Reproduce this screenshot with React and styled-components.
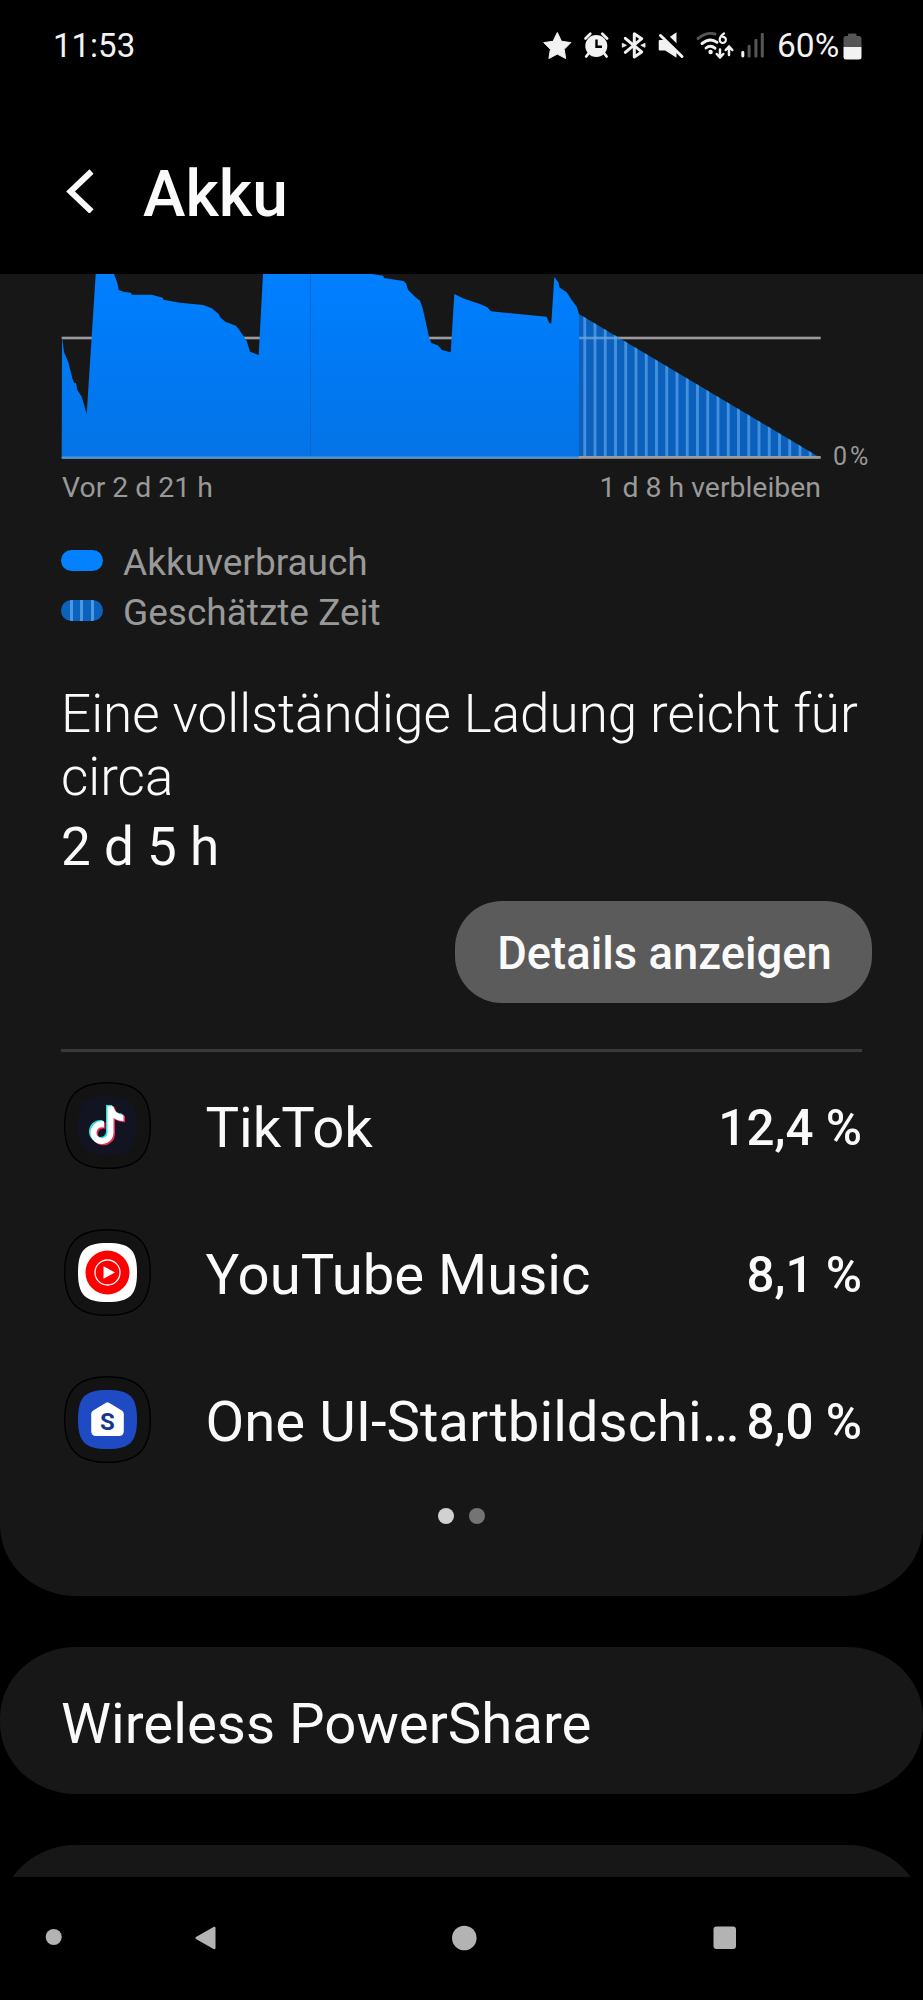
import React from 'react'
import styled, { createGlobalStyle } from 'styled-components'

const GlobalStyle = createGlobalStyle`
*{
    box-sizing:border-box;
}
body{
    margin:0;
    background-color:#000;
    color:#fafafa;
    font-family:Roboto, 'Liberation Sans', sans-serif;
}
`

const Phone = styled.div`
display:grid;
grid-template-rows:92px 182px 1603px 123px;
width:923px;
height:2000px;
overflow:hidden;
background-color:#000;
`

const StatusBar = styled.div`
display:flex;
align-items:flex-start;
justify-content:space-between;
padding:26px 61px 0 53px;
color:#f2f2f2;
font-size:33px;
line-height:40px;

.icons{
    display:flex;
    align-items:center;
}
svg{
    display:block;
}
`

const Percent = styled.span`
width:62px;
margin:0 4px 0 5px;
font-size:33.5px;
`

const Header = styled.header`
display:flex;
align-items:flex-start;
padding:60px 0 0 65px;

h1{
    margin:5px 0 0 48px;
    font-size:64px;
    font-weight:500;
    line-height:76px;
}
.back{
    display:block;
    margin-top:15px;
}
`

const Content = styled.main`
overflow:hidden;
`

const Card = styled.section`
height:${({ $height }) => $height}px;
margin-bottom:51px;
background-color:#171717;
border-radius:${({ $radius }) => $radius};
`

const ChartRow = styled.div`
display:flex;
align-items:flex-end;
padding-left:61px;
height:186px;
gap:12px;
color:#999;

svg{
    display:block;
    flex:none;
}
span{
    font-size:25px;
    line-height:30px;
    letter-spacing:3px;
    margin-bottom:-12px;
}
`

const ChartLabels = styled.div`
display:flex;
justify-content:space-between;
padding:11px 102px 0 62px;
font-size:28.4px;
line-height:34px;
color:#999;
`

const Legend = styled.ul`
list-style:none;
margin:30px 0 0;
padding:0 0 0 61px;
`

const LegendItem = styled.li`
display:flex;
align-items:center;
gap:20px;
height:50px;
font-size:37px;
color:#999;

span{
    margin-top:4px;
}
`

const Swatch = styled.i`
width:42px;
height:21px;
border-radius:11px;
background:${({ $striped }) => $striped
    ? 'linear-gradient(90deg,#0b62bd 9px,#4b97e2 9px,#4b97e2 12px,#0b62bd 12px,#0b62bd 19.5px,#4b97e2 19.5px,#4b97e2 22.5px,#0b62bd 22.5px,#0b62bd 30px,#4b97e2 30px,#4b97e2 33px,#0b62bd 33px)'
    : '#0381fe'};
`

const Estimate = styled.div`
padding:48px 40px 0 61px;
font-size:53px;
line-height:62.5px;

p{
    margin:0;
    font-weight:300;
}
strong{
    display:block;
    margin-top:8px;
    font-weight:400;
}
`

const DetailsButton = styled.button`
display:block;
width:417px;
height:102px;
margin:22px 51px 0 auto;
padding:4px 0 0 2px;
border:0;
border-radius:47px;
background-color:#5b5b5b;
color:#fafafa;
font-family:inherit;
font-size:45.4px;
font-weight:500;
`

const Divider = styled.hr`
height:3px;
margin:46px 61px 0;
border:0;
background-color:#3a3a3a;
`

const AppRow = styled.div`
display:flex;
align-items:center;
height:147px;
padding:0 61px 0 64px;

svg{
    display:block;
    flex:none;
}
.name{
    flex:none;
    margin:6px 0 0 54.5px;
    font-size:56.3px;
    line-height:70px;
    white-space:nowrap;
}
.usage{
    margin:6px 0 0 auto;
    font-size:49.3px;
    font-weight:500;
    line-height:60px;
    white-space:nowrap;
}
`

const Dots = styled.div`
display:flex;
justify-content:center;
gap:15px;
margin-top:15px;
`

const Dot = styled.span`
width:16px;
height:16px;
border-radius:50%;
background-color:${({ $active }) => $active ? '#d1d1d1' : '#747474'};
`

const MenuTitle = styled.h2`
margin:0;
padding:42px 0 0 61px;
font-size:56.4px;
font-weight:400;
line-height:70px;
`

const NavBar = styled.nav`
display:flex;
align-items:center;

svg{
    display:block;
}
`

// battery level over time, in chart coordinates
const history = [
    [62, 337], [64, 352], [68.3, 362.3], [72.3, 378.3], [74.3, 383.3], [76, 382.7], [77.3, 390], [81.7, 396.7], [86.7, 414],
    [95.7, 274], [114, 274], [117.3, 282.7], [118.7, 290], [124, 292], [131, 292.7], [131.7, 294.7], [151.7, 294.7],
    [162.7, 297.7], [163.3, 299.7], [180, 302.7], [203.3, 305], [211.7, 308.3], [219, 314.3], [220, 317.3],
    [225.3, 321.7], [236, 325.7], [240, 331], [246.7, 341], [250, 351.7], [258.7, 355], [263, 274], [371.7, 274],
    [383.3, 275.7], [384, 278], [403.3, 281], [406, 283.3], [408, 289.7], [416, 297.7], [420, 300.7], [422.7, 308.3],
    [426, 323.3], [429.3, 338.3], [431.3, 343], [437.7, 345.3], [442, 350], [450.7, 352.3], [454.3, 294],
    [464, 298.7], [480, 304], [487.3, 307.3], [490.7, 311.3], [546.7, 316.7], [549.3, 323.3], [551.3, 323.3],
    [554.3, 277], [558.3, 282.3], [559.7, 287.7], [566.7, 292.3], [571.7, 300], [576.7, 306.7], [579, 314],
]

const stripes = Array.from({ length: 23 }, (_, i) => 583.3 + i * 10.25)

const BatteryChart = () => (
    <svg width="760" height="186" viewBox="61 274 760 186">
        <defs>
            <linearGradient id="usage" x1="0" y1="274" x2="0" y2="458" gradientUnits="userSpaceOnUse">
                <stop offset="0" stopColor="#007fff" />
                <stop offset="0.35" stopColor="#007bf7" />
                <stop offset="1" stopColor="#0473e6" />
            </linearGradient>
            <clipPath id="remaining">
                <path d="M579 314L819 457H579z" />
            </clipPath>
        </defs>
        <rect x="61.7" y="336.7" width="759" height="2.6" fill="#9c9c9c" />
        <path d={`M61.7 458L${history.map((p) => p.join(' ')).join('L')}V458z`} fill="url(#usage)" />
        <path d="M310.5 274V457" stroke="#0a66d0" strokeWidth="1" />
        <g clipPath="url(#remaining)">
            <rect x="579" y="300" width="242" height="160" fill="#0a60bb" />
            {stripes.map((x) => <rect key={x} x={x} y="300" width="2.9" height="160" fill="#4390df" />)}
            <rect x="579" y="336.7" width="60" height="2.6" fill="#6ca5dc" opacity="0.8" />
        </g>
        <rect x="61.7" y="456.5" width="518" height="2.4" fill="#5b93cf" />
        <rect x="579" y="456" width="241.7" height="2.8" fill="#9c9c9c" />
    </svg>
)

const StatusIcons = () => (
    <svg width="232" height="40" viewBox="540 26 232 40" fill="#f2f2f2">
        <path d="M557.3 32.5l4.2 8.8 9.4 1.3-6.7 6.7 1.5 9.2-8.4-4.4-8.4 4.4 1.5-9.2-6.7-6.7 9.4-1.3z" stroke="#f2f2f2" strokeLinejoin="round" />
        {/* alarm */}
        <circle cx="596.3" cy="46" r="11" />
        <path d="M585.5 38.5l4.8-4.7M607.1 38.5l-4.8-4.7M588.5 53.5l-2.3 3M604.3 53.5l2.3 3" stroke="#f2f2f2" strokeWidth="2.7" strokeLinecap="round" />
        <path d="M596.5 39.5v7.3h5.5" fill="none" stroke="#000" strokeWidth="2.4" />
        {/* bluetooth */}
        <path d="M625.3 38.3l16.4 13.6-7.4 5V33.7l7.4 5-16.4 13.6" fill="none" stroke="#f2f2f2" strokeWidth="3" strokeLinejoin="round" strokeLinecap="round" />
        <path d="M622.3 43.3l4.2 2-4.2 2zM645 43.3l-4.2 2 4.2 2z" stroke="#f2f2f2" strokeWidth="0.8" />
        {/* muted speaker */}
        <path d="M658.7 41q0-1 1-1h5.5l11.3-7.7v25.4L665.200 50.500h-5.500q-1 0-1-1z" />
        <path d="M662 32.500l23 22.500" stroke="#000" strokeWidth="5" />
        <path d="M660.500 35.500l21.500 21" stroke="#f2f2f2" strokeWidth="3" strokeLinecap="round" />
        {/* wifi 6 */}
        <g fill="none" strokeWidth="2.9" strokeLinecap="round">
            <path d="M698 38.5q9-7 17-4.500" stroke="#555" />
            <path d="M702 43.500q8-6.500 15-1.200M706 48q4.500-3.800 9 .2" stroke="#f2f2f2" />
            <path d="M724 33.500q-4.300 3-4.300 6.300a3.100 3.100 0 1 0 3-3" stroke="#f2f2f2" strokeWidth="2.200" />
            <path d="M720 49.500v7.500M716.700 54l3.300 3.500 3.300-3.500M729 55v-8M725.700 50l3.300-3.500 3.300 3.500" stroke="#f2f2f2" strokeWidth="2.500" />
        </g>
        <circle cx="710.6" cy="52" r="2.2" />
        {/* mobile signal */}
        <rect x="741.3" y="51" width="3" height="6.5" rx="1.4" />
        <g fill="#555">
            <rect x="747.6" y="45" width="3" height="12.5" rx="1" />
            <rect x="754.4" y="39" width="3" height="18.5" rx="1" />
            <rect x="760.8" y="33" width="3" height="24.5" rx="1" />
        </g>
    </svg>
)

const BatteryIcon = () => (
    <svg width="19" height="27" viewBox="0 0 19 27">
        <path d="M5 1.5q0-1 1-1h6.5q1 0 1 1V3H16q2.5 0 2.5 2.5V14H.5V5.5Q.5 3 3 3h2z" fill="#555" />
        <path d="M.5 14h18v10q0 2.5-2.5 2.5H3Q.5 26.5.5 24z" fill="#f2f2f2" />
    </svg>
)

const squircle = 'M43.5.7C74 .7 86.3 14 86.3 43.5S74 86.3 43.5 86.3.7 73 .7 43.5 14 .7 43.5.7z'
const tile = 'M43.5 14C66 14 73 21 73 43.5S66 73 43.5 73 14 66 14 43.5 21 14 43.5 14z'
const note = 'M42 23h6c.6 4.8 4.2 8.2 10 8.6v6.2c-3.8 0-7.2-1.2-10-3v14.700a11.500 11.500 0 1 1-9.500-11.400v6.300a5.500 5.500 0 1 0 3.500 5.100z'

const AppIcon = ({ app }) => (
    <svg width="87" height="87" viewBox="0 0 87 87">
        <path d={squircle} fill="#131313" stroke="#000" strokeWidth="1.4" />
        {app === 'tiktok' && <>
            <path d={tile} fill="#131421" />
            <path d={note} fill="#25e4dc" />
            <path d={note} fill="#ee2b57" transform="translate(3 2.4)" />
            <path d={note} fill="#fff" transform="translate(1.5 1.2)" />
        </>}
        {app === 'music' && <>
            <path d={tile} fill="#fff" />
            <circle cx="43.5" cy="43.5" r="22" fill="#fe0000" />
            <circle cx="43.5" cy="43.5" r="12.5" fill="none" stroke="#fff" strokeWidth="1.3" />
            <path d="M39.5 37.2l11.5 6.3-11.5 6.3z" fill="#fff" />
        </>}
        {app === 'home' && <>
            <path d={tile} fill="#1e4ac4" />
            <path d="M42 26.8q1.500-1 3 0l12.800 7.700q2 1.300 2 3.500V55q0 5-5 5H32.200q-5 0-5-5V38q0-2.200 2-3.500z" fill="#fff" />
            <text x="43.5" y="53.500" textAnchor="middle" fontSize="24" fontWeight="700" fill="#17378f">S</text>
        </>}
    </svg>
)

const apps = [
    { icon: 'tiktok', name: 'TikTok', usage: '12,4 %' },
    { icon: 'music', name: 'YouTube Music', usage: '8,1 %' },
    { icon: 'home', name: 'One UI-Startbildschi…', usage: '8,0 %' },
]

export default function App() {
    return (
        <>
            <GlobalStyle />
            <Phone>
                <StatusBar>
                    <span>11:53</span>
                    <div className="icons">
                        <StatusIcons />
                        <Percent>60%</Percent>
                        <BatteryIcon />
                    </div>
                </StatusBar>
                <Header>
                    <svg className="back" width="30" height="46" viewBox="0 0 30 46">
                        <path d="M26.5 4.5L5.5 24.5l21 20" fill="none" stroke="#fafafa" strokeWidth="6" />
                    </svg>
                    <h1>Akku</h1>
                </Header>
                <Content>
                    <Card $height={1322} $radius="0 0 76px 76px / 0 0 71px 71px">
                        <ChartRow>
                            <BatteryChart />
                            <span>0%</span>
                        </ChartRow>
                        <ChartLabels>
                            <span>Vor 2 d 21 h</span>
                            <span>1 d 8 h verbleiben</span>
                        </ChartLabels>
                        <Legend>
                            <LegendItem><Swatch /><span>Akkuverbrauch</span></LegendItem>
                            <LegendItem><Swatch $striped /><span>Geschätzte Zeit</span></LegendItem>
                        </Legend>
                        <Estimate>
                            <p>Eine vollständige Ladung reicht für circa</p>
                            <strong>2 d 5 h</strong>
                        </Estimate>
                        <DetailsButton>Details anzeigen</DetailsButton>
                        <Divider />
                        {apps.map((app) => (
                            <AppRow key={app.icon}>
                                <AppIcon app={app.icon} />
                                <span className="name">{app.name}</span>
                                <span className="usage">{app.usage}</span>
                            </AppRow>
                        ))}
                        <Dots>
                            <Dot $active />
                            <Dot />
                        </Dots>
                    </Card>
                    <Card $height={147} $radius="76px / 71px">
                        <MenuTitle>Wireless PowerShare</MenuTitle>
                    </Card>
                    <Card $height={147} $radius="76px / 71px" />
                </Content>
                <NavBar>
                    <svg width="923" height="123" viewBox="0 1877 923 123" fill="#b3b3b3">
                        <circle cx="53.7" cy="1937" r="8" />
                        <path d="M213.500 1927q2-1 2 1v20q0 2-2 1l-17.500-10q-1.500-1 0-2z" />
                        <circle cx="464.3" cy="1938" r="12.3" />
                        <rect x="713.5" y="1926.5" width="22.5" height="22.5" rx="3" />
                    </svg>
                </NavBar>
            </Phone>
        </>
    )
}
